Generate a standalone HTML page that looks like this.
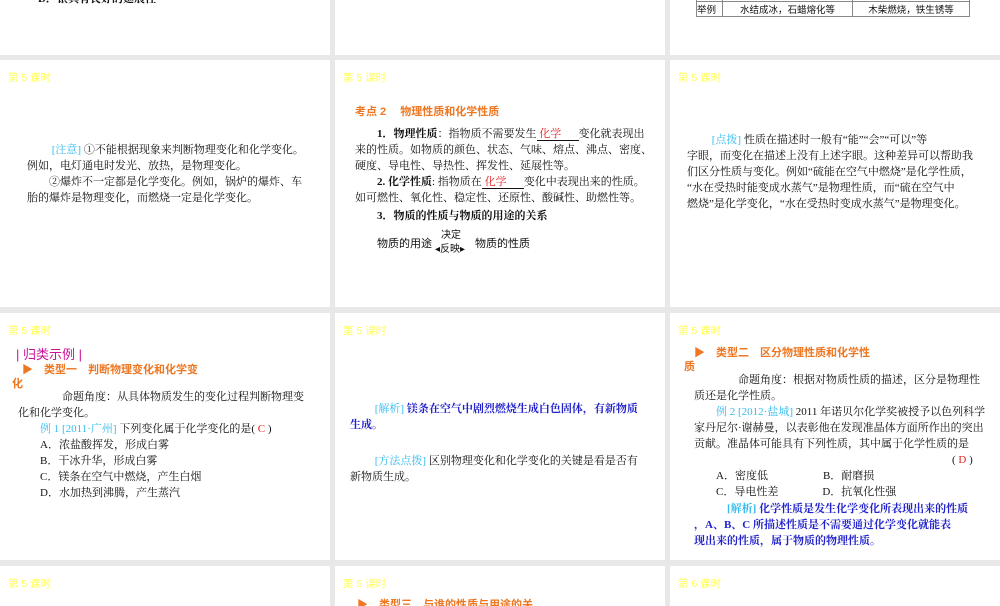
<!DOCTYPE html>
<html><head><meta charset="utf-8"><style>
*{margin:0;padding:0;box-sizing:border-box}
body{width:1000px;height:600px;background:#e8e8e8;position:relative;overflow:hidden;font-family:"Liberation Serif","Noto Serif CJK SC","Noto Sans CJK SC",serif;font-size:11px;color:#111}
.s{position:absolute;background:#fff;overflow:hidden}
.h{position:absolute;left:8px;top:10px;color:#ffff55;font-family:"Liberation Sans","Noto Sans CJK SC",sans-serif;font-size:10.5px}
.t{position:absolute;line-height:16px}
.c{color:#33bbee}.r{color:#e02020}.o{color:#ee7722;font-weight:bold;font-family:"Liberation Sans","Noto Sans CJK SC",sans-serif}
.b{color:#2222cc;font-weight:bold}
u{text-decoration:none;border-bottom:1px solid #111;display:inline-block;line-height:12px}
p{white-space:nowrap}
</style></head><body>
<!-- row1 -->
<div class="s" style="left:0;top:0;width:330px;height:55px"><div class="t" style="left:38px;top:-9px;font-weight:bold">D．银具有良好的延展性</div></div>
<div class="s" style="left:335px;top:0;width:330px;height:55px"></div>
<div class="s" style="left:670px;top:0;width:330px;height:55px">
<table style="position:absolute;left:26px;top:-14px;border-collapse:collapse;font-size:9.5px;font-family:'Liberation Sans','Noto Sans CJK SC',sans-serif;width:274px">
<tr><td style="border:1px solid #888;height:14px;width:26px">区别</td><td style="border:1px solid #888;width:130px"></td><td style="border:1px solid #888"></td></tr>
<tr><td style="border:1px solid #888;height:15px">举例</td><td style="border:1px solid #888;text-align:center">水结成冰，石蜡熔化等</td><td style="border:1px solid #888;text-align:center">木柴燃烧，铁生锈等</td></tr></table></div>
<!-- row2 -->
<div class="s" style="left:0;top:60px;width:330px;height:247px"><div class="h">第 5 课时</div>
<div class="t" style="left:27px;top:82px">
<p>　　 <span class="c">[注意]</span> ①不能根据现象来判断物理变化和化学变化。</p>
<p>例如，电灯通电时发光、放热，是物理变化。</p>
<p>　　②爆炸不一定都是化学变化。例如，锅炉的爆炸、车</p>
<p>胎的爆炸是物理变化，而燃烧一定是化学变化。</p></div></div>
<div class="s" style="left:335px;top:60px;width:330px;height:247px"><div class="h">第 5 课时</div>
<div class="t o" style="left:20px;top:44px">考点 2　 物理性质和化学性质</div>
<div class="t" style="left:20px;top:66px">
<p>　　<b>1．物理性质</b>：指物质不需要发生<u style="width:42px"><span class="r">&nbsp;化学</span></u>变化就表现出</p>
<p>来的性质。如物质的颜色、状态、气味、熔点、沸点、密度、</p>
<p>硬度、导电性、导热性、挥发性、延展性等。</p>
<p>　　<b>2. 化学性质</b>: 指物质在<u style="width:42px"><span class="r">&nbsp;化学</span></u>变化中表现出来的性质。</p>
<p>如可燃性、氧化性、稳定性、还原性、酸碱性、助燃性等。</p>
<p style="margin-top:2px">　　<b>3．物质的性质与物质的用途的关系</b></p></div>
<div class="t" style="left:42px;top:176px;font-family:'Liberation Sans','Noto Sans CJK SC',sans-serif">物质的用途</div>
<div class="t" style="left:106px;top:168px;font-size:10px;font-family:'Liberation Sans','Noto Sans CJK SC',sans-serif">决定</div>
<div class="t" style="left:100px;top:182px;font-size:10px;font-family:'Liberation Sans','Noto Sans CJK SC',sans-serif">◂反映▸</div>
<div class="t" style="left:140px;top:176px;font-family:'Liberation Sans','Noto Sans CJK SC',sans-serif">物质的性质</div></div>
<div class="s" style="left:670px;top:60px;width:330px;height:247px"><div class="h">第 5 课时</div>
<div class="t" style="left:17px;top:72px">
<p>　　 <span class="c">[点拨]</span> 性质在描述时一般有“能”“会”“可以”等</p>
<p>字眼，而变化在描述上没有上述字眼。这种差异可以帮助我</p>
<p>们区分性质与变化。例如“硫能在空气中燃烧”是化学性质，</p>
<p>“水在受热时能变成水蒸气”是物理性质，而“硫在空气中</p>
<p>燃烧”是化学变化，“水在受热时变成水蒸气”是物理变化。</p></div></div>
<!-- row3 -->
<div class="s" style="left:0;top:313px;width:330px;height:247px"><div class="h">第 5 课时</div>
<div class="t" style="left:16px;top:34px;color:#cc1199;font-size:13px;font-family:'Liberation Sans','Noto Sans CJK SC',sans-serif">| 归类示例 |</div>
<div class="t o" style="left:22px;top:49px">▶　类型一　判断物理变化和化学变</div>
<div class="t o" style="left:12px;top:63px">化</div>
<div class="t" style="left:18px;top:76px">
<p>　　　　命题角度：从具体物质发生的变化过程判断物理变</p>
<p>化和化学变化。</p>
<p>　　<span class="c">例 1 [2011·广州]</span> 下列变化属于化学变化的是( <span class="r">C</span> )</p>
<p>　　A．浓盐酸挥发，形成白雾</p>
<p>　　B．干冰升华，形成白雾</p>
<p>　　C．镁条在空气中燃烧，产生白烟</p>
<p>　　D．水加热到沸腾，产生蒸汽</p></div></div>
<div class="s" style="left:335px;top:313px;width:330px;height:247px"><div class="h">第 5 课时</div>
<div class="t" style="left:15px;top:88px">
<p>　　 <span class="c">[解析]</span> <span class="b">镁条在空气中剧烈燃烧生成白色固体，有新物质</span></p>
<p class="b">生成。</p>
<p style="margin-top:20px">　　 <span class="c">[方法点拨]</span> 区别物理变化和化学变化的关键是看是否有</p>
<p>新物质生成。</p></div></div>
<div class="s" style="left:670px;top:313px;width:330px;height:247px"><div class="h">第 5 课时</div>
<div class="t o" style="left:24px;top:32px">▶　类型二　区分物理性质和化学性</div>
<div class="t o" style="left:14px;top:46px">质</div>
<div class="t" style="left:24px;top:59px">
<p>　　　　命题角度：根据对物质性质的描述，区分是物理性</p>
<p>质还是化学性质。</p>
<p>　　<span class="c">例 2 [2012·盐城]</span> 2011 年诺贝尔化学奖被授予以色列科学</p>
<p>家丹尼尔·谢赫曼，以表彰他在发现准晶体方面所作出的突出</p>
<p>贡献。准晶体可能具有下列性质，其中属于化学性质的是</p>
<p style="padding-left:258px">( <span class="r">D</span> )</p>
<p>　　A．密度低　　　　　B．耐磨损</p>
<p>　　C．导电性差　　　　D．抗氧化性强</p>
<p class="b" style="margin-top:1px">　　　<span class="c">[解析]</span> 化学性质是发生化学变化所表现出来的性质</p>
<p class="b">，A、B、C 所描述性质是不需要通过化学变化就能表</p>
<p class="b">现出来的性质，属于物质的物理性质。</p></div></div>
<!-- row4 -->
<div class="s" style="left:0;top:566px;width:330px;height:40px"><div class="h">第 5 课时</div></div>
<div class="s" style="left:335px;top:566px;width:330px;height:40px"><div class="h">第 5 课时</div><div class="t o" style="left:22px;top:31px">▶　类型三　与谁的性质与用途的关</div></div>
<div class="s" style="left:670px;top:566px;width:330px;height:40px"><div class="h">第 6 课时</div></div>
</body></html>
